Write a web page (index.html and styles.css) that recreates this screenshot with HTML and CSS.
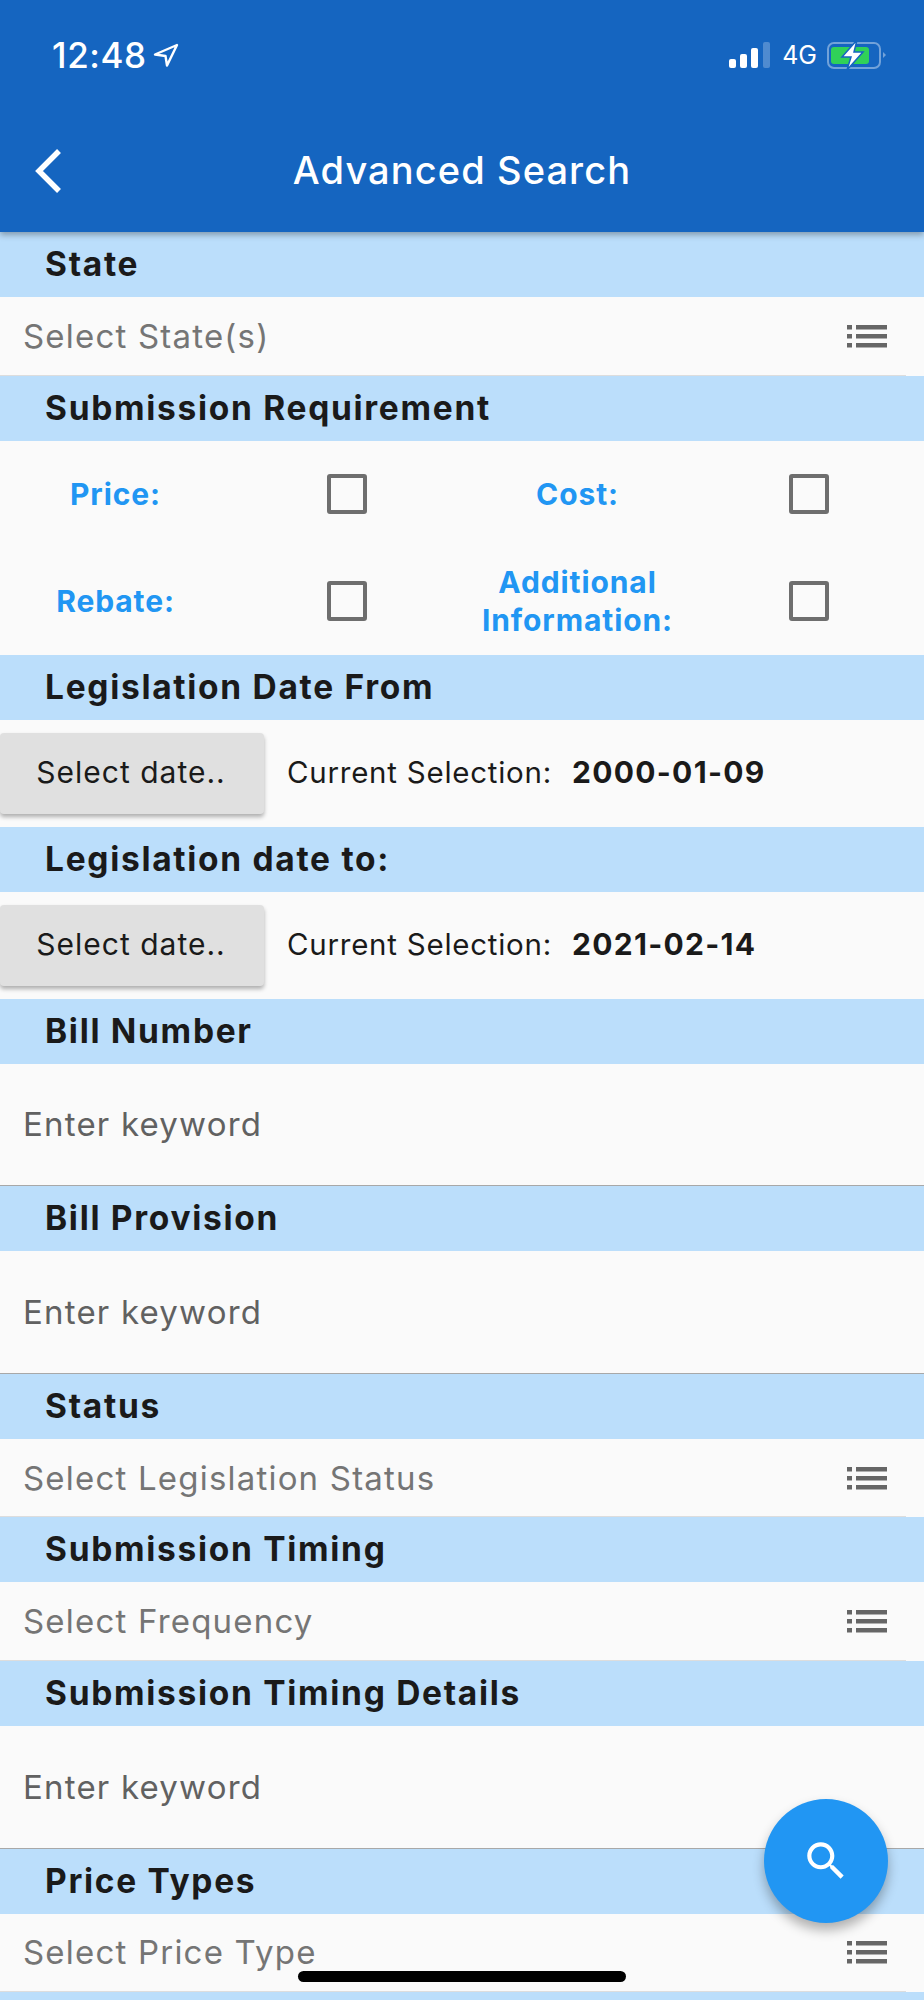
FILE: index.html
```html
<!DOCTYPE html>
<html>

<head>
    <title>Advanced Search</title>
    <link rel="stylesheet" href="styles.css">
</head>

<body>
    <header class="app-bar">
        <div class="status-bar">
            <div class="status-left">
                <span class="time">12:48</span>
                <svg class="nav-arrow" width="26" height="24" viewBox="0 0 26 24">
                    <path d="M24 2 2 11.500l10.500 1.500 1.500 9.500z" fill="none" stroke="#fff" stroke-width="2.400" stroke-linejoin="round"/>
                </svg>
            </div>
            <div class="status-right">
                <svg width="42" height="26" viewBox="0 0 42 26">
                    <rect x="0" y="17" width="7" height="9" rx="2" fill="#fff"/>
                    <rect x="11" y="12" width="7" height="14" rx="2" fill="#fff"/>
                    <rect x="22" y="6" width="7" height="20" rx="2" fill="#fff"/>
                    <rect x="34" y="0" width="7" height="26" rx="2" fill="#fff" opacity="0.25"/>
                </svg>
                <span class="network">4G</span>
                <svg width="60" height="30" viewBox="0 0 60 30">
                    <rect x="1" y="3" width="52" height="25" rx="6" fill="none" stroke="#fff" stroke-width="2" opacity="0.4"/>
                    <rect x="4" y="7" width="38" height="17" rx="3" fill="#30d158"/>
                    <path d="M56 12l3 3-3 3z" fill="#fff" opacity="0.4"/>
                    <path d="M30 0 15 17h9l-4 13 16-18h-9z" fill="#fff" stroke="#1565c0" stroke-width="1.500"/>
                </svg>
            </div>
        </div>
        <div class="title-bar">
            <svg class="back" width="28" height="46" viewBox="0 0 28 46">
                <path d="M24 3 4 23l20 20" fill="none" stroke="#fff" stroke-width="5.500"/>
            </svg>
            <h1>Advanced Search</h1>
            <span></span>
        </div>
    </header>

    <main>
        <h2 class="section-title">State</h2>
        <div class="select-row">
            <span>Select State(s)</span>
            <svg width="40" height="24" viewBox="0 0 40 24"><path d="M0 1h5v4.500H0zM9 1h31v4.500H9zM0 10h5v4.500H0zM9 10h31v4.500H9zM0 19h5v4.500H0zM9 19h31v4.500H9z" fill="#666"/></svg>
        </div>

        <h2 class="section-title">Submission Requirement</h2>
        <div class="check-grid">
            <div class="check-label">Price:</div>
            <div class="check-cell"><span class="checkbox"></span></div>
            <div class="check-label">Cost:</div>
            <div class="check-cell"><span class="checkbox"></span></div>
            <div class="check-label">Rebate:</div>
            <div class="check-cell"><span class="checkbox"></span></div>
            <div class="check-label">Additional Information:</div>
            <div class="check-cell"><span class="checkbox"></span></div>
        </div>

        <h2 class="section-title">Legislation Date From</h2>
        <div class="date-row">
            <button class="date-btn">Select date..</button>
            <span class="current">Current Selection:</span>
            <strong class="date-value">2000-01-09</strong>
        </div>

        <h2 class="section-title">Legislation date to:</h2>
        <div class="date-row">
            <button class="date-btn">Select date..</button>
            <span class="current">Current Selection:</span>
            <strong class="date-value">2021-02-14</strong>
        </div>

        <h2 class="section-title">Bill Number</h2>
        <div class="input-row">Enter keyword</div>

        <h2 class="section-title">Bill Provision</h2>
        <div class="input-row">Enter keyword</div>

        <h2 class="section-title">Status</h2>
        <div class="select-row">
            <span>Select Legislation Status</span>
            <svg width="40" height="24" viewBox="0 0 40 24"><path d="M0 1h5v4.500H0zM9 1h31v4.500H9zM0 10h5v4.500H0zM9 10h31v4.500H9zM0 19h5v4.500H0zM9 19h31v4.500H9z" fill="#666"/></svg>
        </div>

        <h2 class="section-title">Submission Timing</h2>
        <div class="select-row">
            <span>Select Frequency</span>
            <svg width="40" height="24" viewBox="0 0 40 24"><path d="M0 1h5v4.500H0zM9 1h31v4.500H9zM0 10h5v4.500H0zM9 10h31v4.500H9zM0 19h5v4.500H0zM9 19h31v4.500H9z" fill="#666"/></svg>
        </div>

        <h2 class="section-title">Submission Timing Details</h2>
        <div class="input-row">Enter keyword</div>

        <h2 class="section-title">Price Types</h2>
        <div class="select-row">
            <span>Select Price Type</span>
            <svg width="40" height="24" viewBox="0 0 40 24"><path d="M0 1h5v4.500H0zM9 1h31v4.500H9zM0 10h5v4.500H0zM9 10h31v4.500H9zM0 19h5v4.500H0zM9 19h31v4.500H9z" fill="#666"/></svg>
        </div>

        <div class="section-title"></div>
    </main>

    <button class="fab">
        <svg width="50" height="50" viewBox="0 0 24 24">
            <path d="M15.500 14h-.79l-.28-.27C15.410 12.590 16 11.110 16 9.500 16 5.910 13.090 3 9.500 3S3 5.910 3 9.500 5.910 16 9.500 16c1.610 0 3.090-.59 4.230-1.570l.27.28v.79l5 4.990L20.490 19l-4.990-5zm-6 0C7.010 14 5 11.990 5 9.500S7.010 5 9.500 5 14 7.010 14 9.500 11.990 14 9.500 14z" fill="#fff"/>
        </svg>
    </button>
    <div class="home-indicator"></div>
</body>

</html>
```

FILE: styles.css
```css
html, body {
    margin: 0;
    height: 2000px;
    overflow: hidden;
}

body {
    position: relative;
    background: #fafafa;
    font-family: Inter, sans-serif;
    color: #1a1a1a;
}

.app-bar {
    position: relative;
    z-index: 1;
    height: 232px;
    background: #1565c0;
    color: #fff;
    box-shadow: 0 3px 6px rgba(0, 0, 0, 0.3);
}

.status-bar {
    height: 110px;
    padding: 0 37px 0 52px;
    display: flex;
    align-items: center;
    justify-content: space-between;
}

.status-left,
.status-right {
    display: flex;
    align-items: center;
}

.time {
    font-size: 35px;
    font-weight: 500;
    letter-spacing: 0.6px;
}

.nav-arrow {
    margin-left: 6px;
}

.network {
    font-size: 25px;
    margin: 0 10px 0 11px;
}

.title-bar {
    height: 122px;
    display: grid;
    grid-template-columns: 1fr auto 1fr;
    align-items: center;
}

.back {
    margin-left: 35px;
}

h1 {
    margin: 0 0 3px;
    font-size: 38px;
    font-weight: 500;
    letter-spacing: 1.1px;
}

.section-title {
    margin: 0;
    height: 65px;
    padding-left: 45px;
    background: #bbdefb;
    font-size: 33.5px;
    font-weight: 700;
    line-height: 65px;
    letter-spacing: 1.7px;
}

.select-row {
    box-sizing: border-box;
    height: 78.7px;
    margin-right: 18px;
    padding: 0 19px 0 23px;
    display: flex;
    align-items: center;
    justify-content: space-between;
    border-bottom: 1px solid #ddd;
    font-size: 33px;
    color: #757575;
    letter-spacing: 1.2px;
}

.input-row {
    box-sizing: border-box;
    height: 122.5px;
    padding-left: 23px;
    display: flex;
    align-items: center;
    border-bottom: 1.500px solid #a8a8a8;
    font-size: 33px;
    color: #616161;
    letter-spacing: 1.2px;
}

.check-grid {
    display: grid;
    grid-template-columns: repeat(4, 1fr);
    grid-auto-rows: 107px;
}

.check-label {
    display: flex;
    align-items: center;
    justify-content: center;
    text-align: center;
    font-size: 30px;
    font-weight: 700;
    line-height: 38px;
    color: #2196f3;
    letter-spacing: 0.9px;
}

.check-cell {
    display: flex;
    align-items: center;
    justify-content: center;
}

.checkbox {
    box-sizing: border-box;
    width: 40px;
    height: 40px;
    border: 4px solid #6e6e6e;
    border-radius: 3px;
}

.date-row {
    height: 107px;
    display: flex;
    align-items: center;
    font-size: 29.5px;
    letter-spacing: 0.75px;
}

.date-btn {
    width: 264px;
    height: 81px;
    padding: 0 2px 2px 0;
    border: none;
    border-radius: 4px;
    background: #e0e0e0;
    box-shadow: 0 3px 4px rgba(0, 0, 0, 0.3);
    font-family: Inter, sans-serif;
    font-size: 30px;
    color: #1a1a1a;
    letter-spacing: 1px;
}

.current {
    margin: 0 0 2px 23px;
}

.date-value {
    margin: 0 0 2px 20px;
    font-size: 30px;
    font-weight: 700;
    letter-spacing: 1.3px;
}

.fab {
    position: absolute;
    left: 764px;
    top: 1799px;
    width: 124px;
    height: 124px;
    padding: 0;
    border: none;
    border-radius: 50%;
    background: #2196f3;
    box-shadow: 0 7px 12px rgba(0, 0, 0, 0.3);
    display: flex;
    align-items: center;
    justify-content: center;
}

.home-indicator {
    position: absolute;
    left: 298px;
    top: 1971px;
    width: 328px;
    height: 11px;
    border-radius: 6px;
    background: #000;
}
```
